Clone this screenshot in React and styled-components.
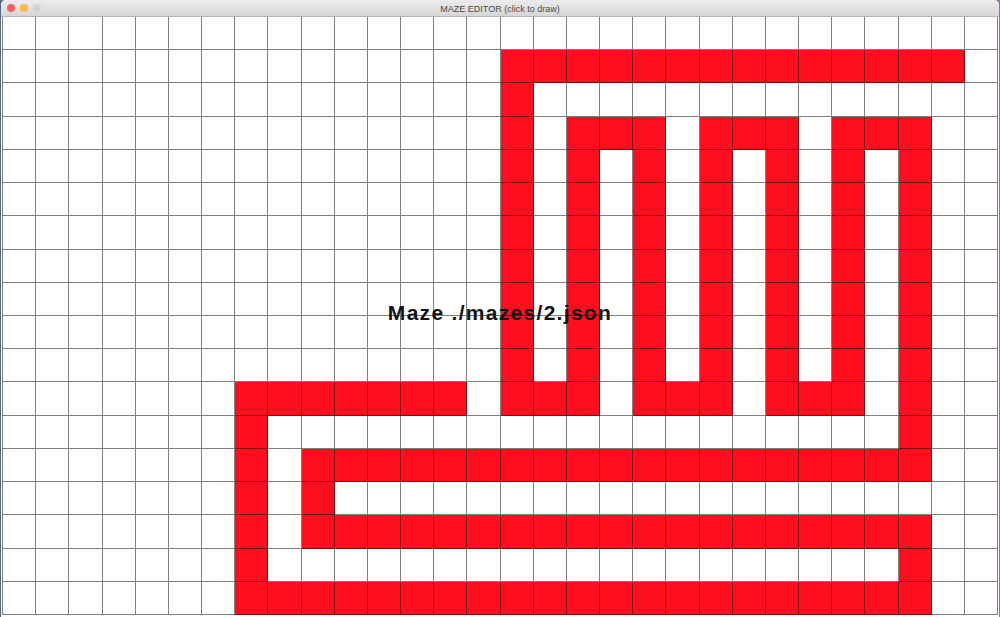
import React from 'react';
import styled, { createGlobalStyle } from 'styled-components';

const COLS = 30;
const ROWS = 18;

// red walls per row, as [from, to] column ranges (inclusive)
const walls = [
  [],
  [[15, 28]],
  [[15, 15]],
  [[15, 15], [17, 19], [21, 23], [25, 27]],
  [[15, 15], [17, 17], [19, 19], [21, 21], [23, 23], [25, 25], [27, 27]],
  [[15, 15], [17, 17], [19, 19], [21, 21], [23, 23], [25, 25], [27, 27]],
  [[15, 15], [17, 17], [19, 19], [21, 21], [23, 23], [25, 25], [27, 27]],
  [[15, 15], [17, 17], [19, 19], [21, 21], [23, 23], [25, 25], [27, 27]],
  [[15, 15], [17, 17], [19, 19], [21, 21], [23, 23], [25, 25], [27, 27]],
  [[15, 15], [17, 17], [19, 19], [21, 21], [23, 23], [25, 25], [27, 27]],
  [[15, 15], [17, 17], [19, 19], [21, 21], [23, 23], [25, 25], [27, 27]],
  [[7, 13], [15, 17], [19, 21], [23, 25], [27, 27]],
  [[7, 7], [27, 27]],
  [[7, 7], [9, 27]],
  [[7, 7], [9, 9]],
  [[7, 7], [9, 27]],
  [[7, 7], [27, 27]],
  [[7, 27]],
];

const isWall = (r, c) => walls[r].some(([a, b]) => c >= a && c <= b);

function App() {
  const cells = [];
  for (let r = 0; r < ROWS; r++) {
    for (let c = 0; c < COLS; c++) {
      cells.push(<Cell key={r + '-' + c} $wall={isWall(r, c)} />);
    }
  }

  return (
    <>
      <GlobalStyle />
      <Desktop>
        <Window>
          <TitleBar>
            <Lights>
              <Light $color="#fc605c" />
              <Light $color="#fdbc40" />
              <Light $color="#d3d3d3" />
            </Lights>
            <Title>MAZE EDITOR (click to draw)</Title>
          </TitleBar>
          <Canvas>
            <Grid>{cells}</Grid>
            <MazeName>Maze ./mazes/2.json</MazeName>
          </Canvas>
        </Window>
      </Desktop>
    </>
  );
}

export default App;

const GlobalStyle = createGlobalStyle`
  html, body {
    margin: 0;
    padding: 0;
    overflow: hidden;
    background: #6d7c93;
  }
`;

const Desktop = styled.div`
  width: 1000px;
  height: 617px;
  background: linear-gradient(90deg, #4e6a86 0, #4e6a86 2px, #8c7890 2px);
  display: flex;
  justify-content: center;
`;

const Window = styled.div`
  width: 998px;
  height: 617px;
  display: flex;
  flex-direction: column;
  background: #ffffff;
  border-top-left-radius: 5px;
  border-top-right-radius: 5px;
  overflow: hidden;
`;

const TitleBar = styled.div`
  position: relative;
  height: 16px;
  flex-shrink: 0;
  display: flex;
  align-items: center;
  justify-content: center;
  background: linear-gradient(#ececec, #d6d6d6);
  border-bottom: 1px solid #b5b5b5;
`;

const Lights = styled.div`
  position: absolute;
  left: 6px;
  top: 4px;
  display: flex;
  gap: 5px;
`;

const Light = styled.span`
  width: 8px;
  height: 8px;
  border-radius: 50%;
  background: ${props => props.$color};
`;

const Title = styled.div`
  font-family: 'Liberation Sans', Arial, sans-serif;
  font-size: 9px;
  color: #4a4a4a;
  padding-top: 1px;
`;

const Canvas = styled.div`
  position: relative;
  width: 996px;
  height: 598px;
  margin-left: 1px;
`;

const Grid = styled.div`
  width: 100%;
  height: 100%;
  display: grid;
  grid-template-columns: repeat(${COLS}, 1fr);
  grid-template-rows: repeat(${ROWS}, 1fr);
  border-left: 1px solid rgba(0, 0, 0, 0.5);
  box-sizing: border-box;
`;

const Cell = styled.div`
  background: ${props => (props.$wall ? '#ff0e20' : '#ffffff')};
  box-shadow: inset -1px -1px 0 rgba(0, 0, 0, 0.5);
`;

const MazeName = styled.div`
  position: absolute;
  left: 0;
  right: 0;
  top: 285px;
  text-align: center;
  font-family: 'Liberation Sans', Arial, sans-serif;
  font-weight: bold;
  font-size: 21px;
  line-height: 21px;
  letter-spacing: 1.3px;
  color: #111111;
`;
